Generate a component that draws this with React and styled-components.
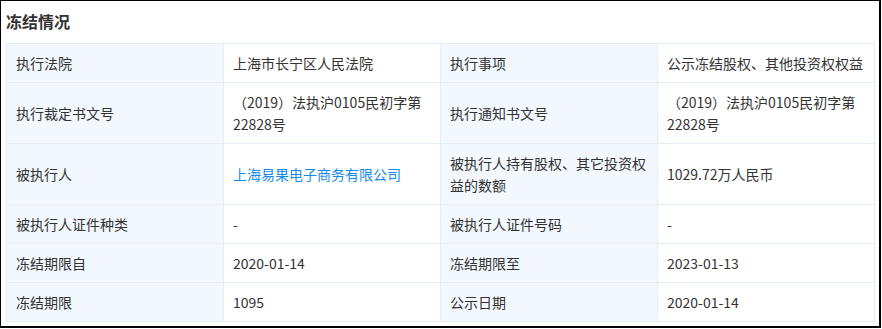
import React from 'react'
import styled, { createGlobalStyle } from 'styled-components'

const GlobalStyle = createGlobalStyle`
  html, body {
    margin: 0;
    padding: 0;
    background: #fff;
  }
  body {
    font-family: "Noto Sans CJK SC", "Microsoft YaHei", sans-serif;
    color: #333;
  }
`

const cells = [
  { label: '执行法院', value: '上海市长宁区人民法院' },
  { label: '执行事项', value: '公示冻结股权、其他投资权权益' },
  { label: '执行裁定书文号', value: '（2019）法执沪0105民初字第22828号' },
  { label: '执行通知书文号', value: '（2019）法执沪0105民初字第22828号' },
  { label: '被执行人', value: '上海易果电子商务有限公司', link: true },
  { label: '被执行人持有股权、其它投资权益的数额', value: '1029.72万人民币' },
  { label: '被执行人证件种类', value: '-' },
  { label: '被执行人证件号码', value: '-' },
  { label: '冻结期限自', value: '2020-01-14' },
  { label: '冻结期限至', value: '2023-01-13' },
  { label: '冻结期限', value: '1095' },
  { label: '公示日期', value: '2020-01-14' },
]

export default function App() {
  return (
    <Frame>
      <GlobalStyle />
      <Title>冻结情况</Title>
      <Grid>
        {cells.map((cell) => (
          <React.Fragment key={cell.label}>
            <Cell $label>{cell.label}</Cell>
            <Cell>{cell.link ? <Link href="#">{cell.value}</Link> : cell.value}</Cell>
          </React.Fragment>
        ))}
      </Grid>
    </Frame>
  )
}

const Frame = styled.div`
  box-sizing: border-box;
  width: 881px;
  height: 328px;
  border: 1px solid #000;
  border-right-width: 2px;
  border-bottom-width: 2px;
  padding: 0 5px;
  background: #fff;
`

const Title = styled.h2`
  margin: 0;
  height: 42px;
  line-height: 40px;
  font-size: 16px;
  font-weight: bold;
  color: #333;
`

const Grid = styled.div`
  display: grid;
  grid-template-columns: repeat(4, 1fr);
  gap: 1px;
  padding: 1px;
  width: 869px;
  box-sizing: border-box;
  background: #e4eef6;
  font-size: 14px;
  line-height: 22px;
`

const Cell = styled.div`
  display: flex;
  align-items: center;
  min-height: 22px;
  padding: 8px 8px 8px 9px;
  background: ${(p) => (p.$label ? '#f2f8fd' : '#fff')};
  color: #333;
`

const Link = styled.a`
  color: #128bed;
  text-decoration: none;
`
